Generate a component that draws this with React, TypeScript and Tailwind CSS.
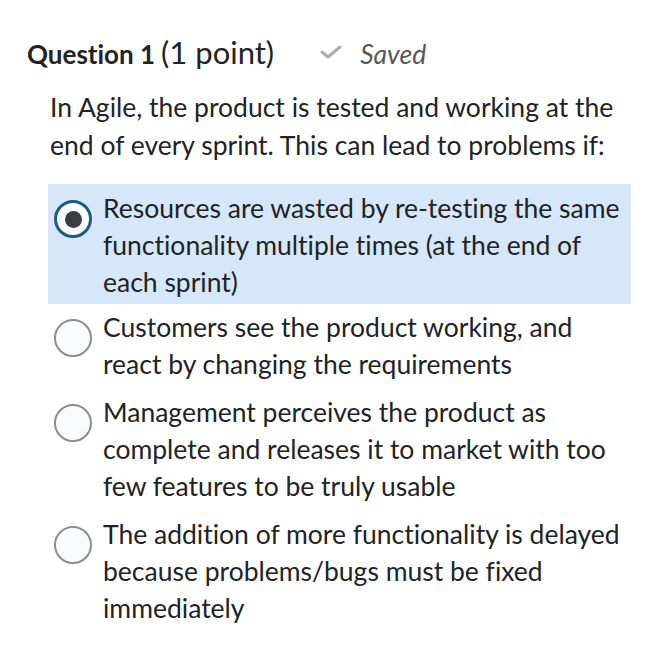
const options = [
  "Resources are wasted by re-testing the same functionality multiple times (at the end of each sprint)",
  "Customers see the product working, and react by changing the requirements",
  "Management perceives the product as complete and releases it to market with too few features to be truly usable",
  "The addition of more functionality is delayed because problems/bugs must be fixed immediately",
];

function Radio({ checked }: { checked: boolean }) {
  return checked ? (
    <div className="w-[38px] h-[38px] rounded-full border-[3.5px] border-[#1d5b84] bg-white flex items-center justify-center shrink-0">
      <div className="w-[17px] h-[17px] rounded-full bg-[#3b3d42]" />
    </div>
  ) : (
    <div className="w-[38px] h-[38px] rounded-full border-2 border-[#8c8c8c] bg-[#fafbfc] shrink-0" />
  );
}

export default function App() {
  const selected = 0;
  return (
    <div
      className="w-[658px] h-[656px] bg-white text-[#222325] pt-[34px] pl-[27px] [font-variant-ligatures:none]"
      style={{ fontFamily: "Lato, 'Liberation Sans', sans-serif" }}
    >
      <div className="flex items-baseline h-[36px] leading-[36px]">
        <span className="text-[26px] font-bold">Question 1</span>
        <span className="text-[31px] ml-[6px]">(1 point)</span>
        <span className="ml-[46px] mr-[18px] self-center flex">
          <svg width="22" height="14" viewBox="0 0 22 14">
            <path d="M2 7 L8 12 L20 2" fill="none" stroke="#adadad" strokeWidth="3" strokeLinecap="round" strokeLinejoin="round" />
          </svg>
        </span>
        <span className="text-[26.5px] italic text-[#575757]">Saved</span>
      </div>

      <p className="mt-[18px] ml-[23px] w-[590px] text-[26.5px] leading-[38px]">
        In Agile, the product is tested and working at the end of every sprint. This can lead to problems if:
      </p>

      <div className="mt-[20px] ml-[21px] w-[583px] flex flex-col">
        {options.map((o, i) => (
          <div
            key={i}
            className={
              "flex gap-[11px] pl-[6px] pr-[4px] " +
              (i === selected ? "bg-[#d5e7f8] pt-[6px] pb-[3px]" : "pt-[5px] pb-[6px]")
            }
          >
            <div className="pt-[10px]">
              <Radio checked={i === selected} />
            </div>
            <div className="text-[26.5px] leading-[37px]">{o}</div>
          </div>
        ))}
      </div>
    </div>
  );
}
